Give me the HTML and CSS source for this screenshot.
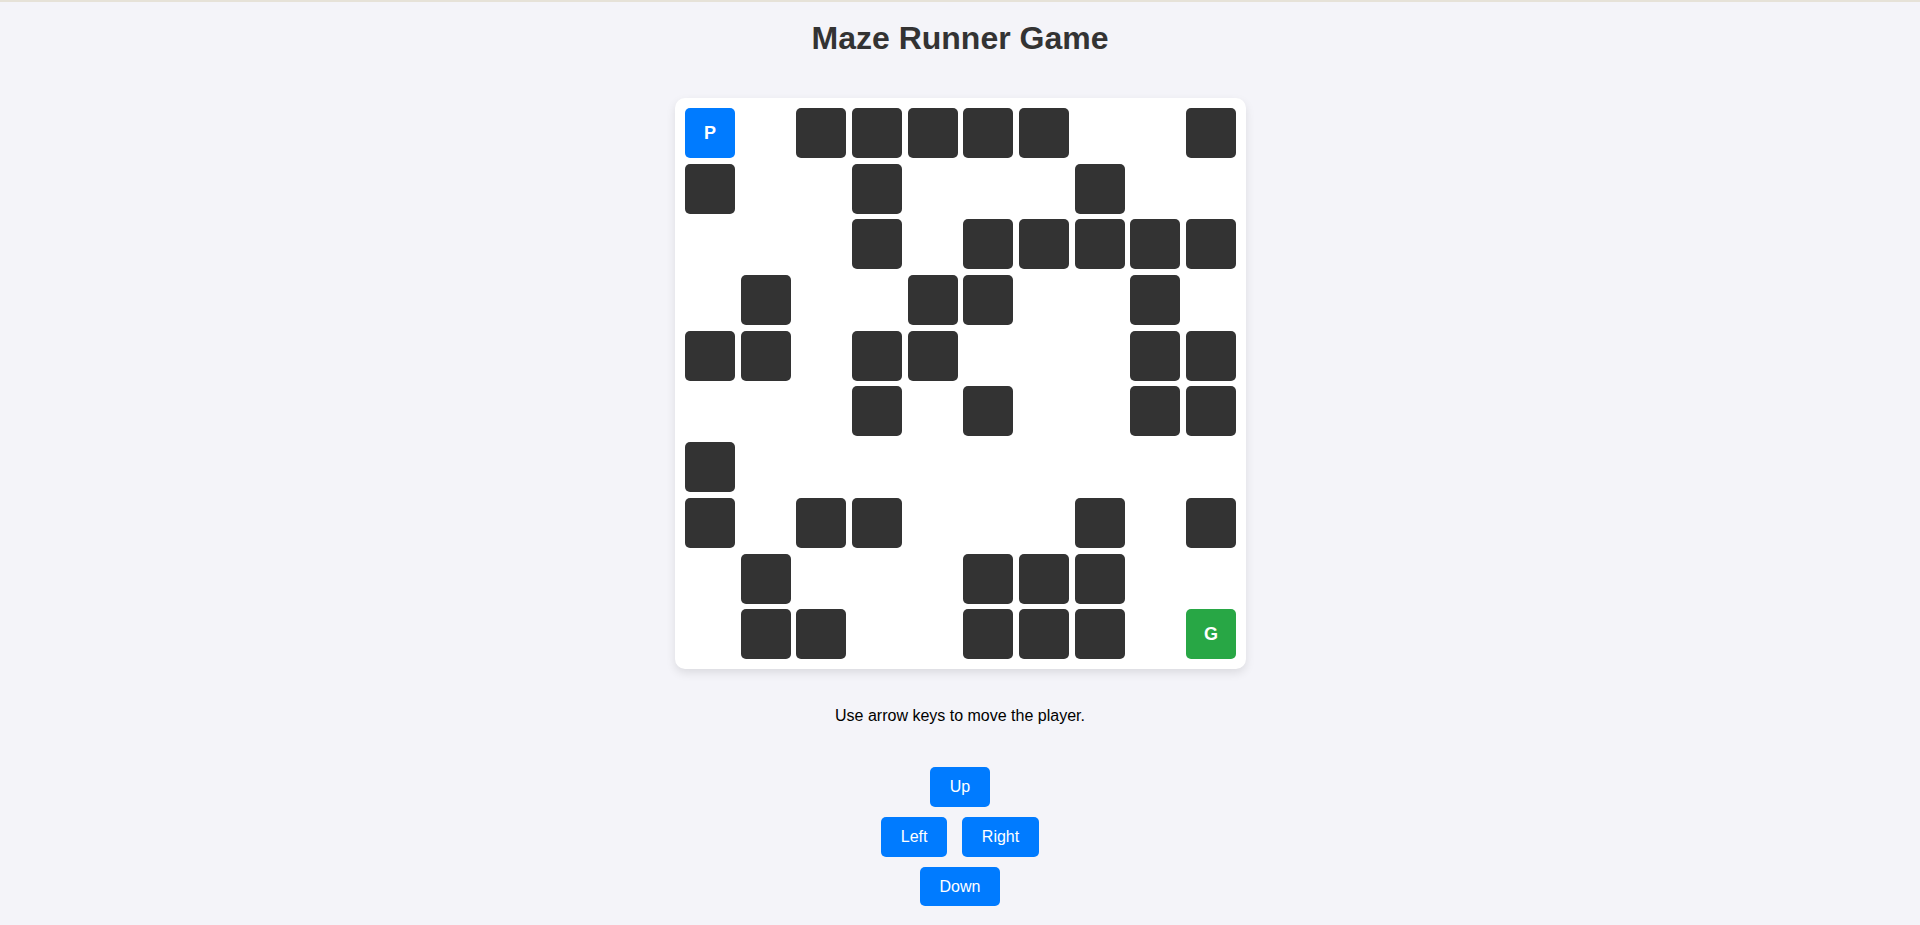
FILE: index.html
```html
<!DOCTYPE html>
<html lang="en">
<head>
<meta charset="utf-8">
<title>Maze Runner Game</title>
<link rel="stylesheet" href="styles.css">
</head>
<body>
<main class="page">
  <h1 class="title">Maze Runner Game</h1>
  <div class="board">
    <div class="cell player">P</div><div class="cell"></div><div class="cell wall"></div><div class="cell wall"></div><div class="cell wall"></div><div class="cell wall"></div><div class="cell wall"></div><div class="cell"></div><div class="cell"></div><div class="cell wall"></div>
    <div class="cell wall"></div><div class="cell"></div><div class="cell"></div><div class="cell wall"></div><div class="cell"></div><div class="cell"></div><div class="cell"></div><div class="cell wall"></div><div class="cell"></div><div class="cell"></div>
    <div class="cell"></div><div class="cell"></div><div class="cell"></div><div class="cell wall"></div><div class="cell"></div><div class="cell wall"></div><div class="cell wall"></div><div class="cell wall"></div><div class="cell wall"></div><div class="cell wall"></div>
    <div class="cell"></div><div class="cell wall"></div><div class="cell"></div><div class="cell"></div><div class="cell wall"></div><div class="cell wall"></div><div class="cell"></div><div class="cell"></div><div class="cell wall"></div><div class="cell"></div>
    <div class="cell wall"></div><div class="cell wall"></div><div class="cell"></div><div class="cell wall"></div><div class="cell wall"></div><div class="cell"></div><div class="cell"></div><div class="cell"></div><div class="cell wall"></div><div class="cell wall"></div>
    <div class="cell"></div><div class="cell"></div><div class="cell"></div><div class="cell wall"></div><div class="cell"></div><div class="cell wall"></div><div class="cell"></div><div class="cell"></div><div class="cell wall"></div><div class="cell wall"></div>
    <div class="cell wall"></div><div class="cell"></div><div class="cell"></div><div class="cell"></div><div class="cell"></div><div class="cell"></div><div class="cell"></div><div class="cell"></div><div class="cell"></div><div class="cell"></div>
    <div class="cell wall"></div><div class="cell"></div><div class="cell wall"></div><div class="cell wall"></div><div class="cell"></div><div class="cell"></div><div class="cell"></div><div class="cell wall"></div><div class="cell"></div><div class="cell wall"></div>
    <div class="cell"></div><div class="cell wall"></div><div class="cell"></div><div class="cell"></div><div class="cell"></div><div class="cell wall"></div><div class="cell wall"></div><div class="cell wall"></div><div class="cell"></div><div class="cell"></div>
    <div class="cell"></div><div class="cell wall"></div><div class="cell wall"></div><div class="cell"></div><div class="cell"></div><div class="cell wall"></div><div class="cell wall"></div><div class="cell wall"></div><div class="cell"></div><div class="cell goal">G</div>
  </div>
  <p class="hint">Use arrow keys to move the player.</p>
  <div class="controls">
    <div class="row"><button class="btn" type="button">Up</button></div>
    <div class="row"><button class="btn" type="button">Left</button><button class="btn" type="button">Right</button></div>
    <div class="row"><button class="btn" type="button">Down</button></div>
  </div>
</main>
</body>
</html>
```

FILE: styles.css
```css
html, body {
  margin: 0;
  padding: 0;
}

body {
  background: #f4f4f9;
  border-top: 2px solid #e6e2d8;
  font-family: "Liberation Sans", Arial, sans-serif;
  color: #333;
}

.page {
  display: flex;
  flex-direction: column;
  align-items: center;
}

.title {
  margin: 18px 0 41px;
  font-size: 32px;
  font-weight: bold;
  line-height: normal;
  color: #333;
}

.board {
  display: grid;
  grid-template-columns: repeat(10, 50px);
  grid-auto-rows: 50px;
  gap: 5.7px;
  padding: 10px;
  margin-left: 1px;
  background: #fff;
  border-radius: 10px;
  box-shadow: 0 4px 10px rgba(0, 0, 0, 0.1);
}

.cell {
  border-radius: 5px;
  display: flex;
  align-items: center;
  justify-content: center;
  font-size: 18px;
  font-weight: bold;
  color: #fff;
}

.wall {
  background: #333;
}

.player {
  background: #007bff;
}

.goal {
  background: #28a745;
}

.hint {
  margin: 38px 0 0;
  font-size: 16px;
  line-height: normal;
  color: #000;
}

.controls {
  margin-top: 42px;
  display: flex;
  flex-direction: column;
  align-items: center;
  gap: 10.5px;
}

.row {
  display: flex;
  gap: 14.4px;
}

.btn {
  font-family: "Liberation Sans", Arial, sans-serif;
  font-size: 16px;
  line-height: 18.4px;
  padding: 10.5px 20px;
  border: none;
  border-radius: 5px;
  background: #007bff;
  color: #fff;
  cursor: pointer;
}
```
